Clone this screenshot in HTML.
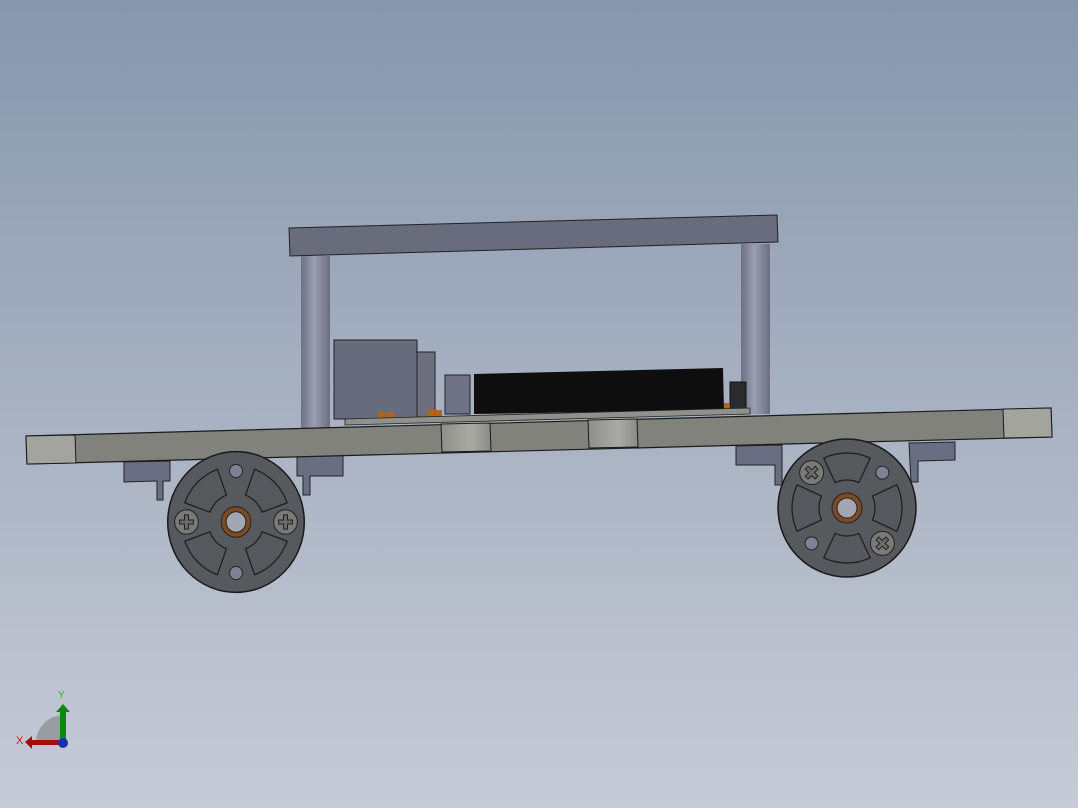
<!DOCTYPE html>
<html><head><meta charset="utf-8"><style>
html,body{margin:0;padding:0;width:1078px;height:808px;overflow:hidden}
svg{display:block}
</style></head><body>
<svg width="1078" height="808" viewBox="0 0 1078 808" xmlns="http://www.w3.org/2000/svg">
<defs>
<linearGradient id="bg" x1="0" y1="0" x2="0" y2="1">
<stop offset="0" stop-color="#8797ac"/><stop offset="1" stop-color="#c7cbd7"/>
</linearGradient>
<linearGradient id="post" x1="0" y1="0" x2="1" y2="0">
<stop offset="0" stop-color="#6d7184"/><stop offset="0.45" stop-color="#9a9eb0"/><stop offset="1" stop-color="#6a6e80"/>
</linearGradient>
<linearGradient id="seg" x1="0" y1="0" x2="1" y2="0">
<stop offset="0" stop-color="#8e8f88"/><stop offset="0.6" stop-color="#a9aaa4"/><stop offset="1" stop-color="#8a8b85"/>
</linearGradient>
<g id="win"><path d="M26.3,9.6 L51.7,18.8 A55,55 0 0 1 18.8,51.7 L9.6,26.3 A28,28 0 0 0 26.3,9.6 Z" fill="#55585c" stroke="#1c1c1c" stroke-width="1.2"/></g>
<g id="wheel">
<circle r="69" fill="#56595d" stroke="#1a1a1a" stroke-width="1.5"/>
<use href="#win"/><use href="#win" transform="rotate(90)"/><use href="#win" transform="rotate(180)"/><use href="#win" transform="rotate(270)"/>
<g transform="translate(50,0)"><circle r="12" fill="#7a7b78" stroke="#222" stroke-width="1"/><path d="M-2,-7h4v5h5v4h-5v5h-4v-5h-5v-4h5z" fill="#6a6b68" stroke="#222" stroke-width="1"/></g>
<g transform="translate(-50,0)"><circle r="12" fill="#7a7b78" stroke="#222" stroke-width="1"/><path d="M-2,-7h4v5h5v4h-5v5h-4v-5h-5v-4h5z" fill="#6a6b68" stroke="#222" stroke-width="1"/></g>
<circle cx="0" cy="-50" r="6.5" fill="#7d8294" stroke="#222" stroke-width="1"/>
<circle cx="0" cy="50" r="6.5" fill="#7d8294" stroke="#222" stroke-width="1"/>
<circle r="15" fill="#7e4a22" stroke="#222" stroke-width="1"/>
<circle r="10" fill="#a2a6b2" stroke="#222" stroke-width="1"/>
</g>
</defs>
<rect width="1078" height="808" fill="url(#bg)"/>

<!-- top bar -->
<polygon points="289,228 777,215 778,242 290,256" fill="#686c7c" stroke="#222" stroke-width="1"/>
<!-- posts -->
<rect x="301" y="256" width="29" height="172" fill="url(#post)"/>
<rect x="741" y="244" width="29" height="170" fill="url(#post)"/>

<!-- components -->
<rect x="334" y="340" width="83" height="79" fill="#676b7c" stroke="#222" stroke-width="1"/>
<rect x="417" y="352" width="18" height="65" fill="#6b6f80" stroke="#222" stroke-width="1"/>
<rect x="445" y="375" width="25" height="39" fill="#6e7284" stroke="#222" stroke-width="1"/>
<polygon points="474,374 723,368 724,410 474,414" fill="#0e0e0e"/>
<rect x="730" y="382" width="16" height="28" fill="#2b2b2b" stroke="#111" stroke-width="1"/>
<rect x="378" y="411" width="7" height="7" fill="#b0651a"/>
<rect x="387" y="411" width="7" height="7" fill="#b0651a"/>
<rect x="428" y="410" width="7" height="7" fill="#b0651a"/>
<rect x="436" y="410" width="6" height="7" fill="#b0651a"/>
<rect x="724" y="403" width="5" height="6" fill="#b0651a"/>
<polygon points="345,419 750,408 750,414 345,425" fill="#8f918a" stroke="#222" stroke-width="0.8"/>

<!-- brackets -->
<polygon points="124,462 170,461 170,481 163,481 163,500 157,500 157,481 124,482" fill="#6a6e82" stroke="#222" stroke-width="1"/>
<polygon points="297,456 343,455 343,476 310,476 310,495 303,495 303,476 297,476" fill="#6a6e82" stroke="#222" stroke-width="1"/>
<polygon points="736,446 782,445 782,485 775,485 775,465 736,465" fill="#6a6e82" stroke="#222" stroke-width="1"/>
<polygon points="909,443 955,442 955,460 918,461 918,482 911,482" fill="#6a6e82" stroke="#222" stroke-width="1"/>

<!-- chassis plate -->
<polygon points="26,436 1051,408 1052,437 27,464" fill="#81827b" stroke="#1a1a1a" stroke-width="1.2"/>
<polygon points="26,436 75,435 76,463 27,464" fill="#a3a49d" stroke="#1a1a1a" stroke-width="1"/>
<polygon points="441,424 490,423 491,451 442,452" fill="url(#seg)" stroke="#1a1a1a" stroke-width="1"/>
<polygon points="588,420 637,419 638,447 589,448" fill="url(#seg)" stroke="#1a1a1a" stroke-width="1"/>
<polygon points="1003,409 1051,408 1052,437 1004,438" fill="#a3a49d" stroke="#1a1a1a" stroke-width="1"/>

<!-- wheels -->
<use href="#wheel" transform="translate(236,522) scale(0.99,1.02)"/>
<use href="#wheel" transform="translate(847,508) rotate(45)"/>

<!-- axis triad -->
<path d="M36,742 A28,28 0 0 1 63,715 L63,742 Z" fill="#9a9ca4"/>
<rect x="60" y="712" width="6" height="30" fill="#0d8a0d"/>
<polygon points="56,712 70,712 63,704" fill="#0d8a0d"/>
<rect x="32" y="740" width="30" height="5" fill="#a01010"/>
<polygon points="32,736 32,749 25,742" fill="#a01010"/>
<circle cx="63" cy="743" r="5" fill="#1a2fb0"/>
<text x="58" y="698" font-family="Liberation Sans, sans-serif" font-size="10" fill="#1bc41b">Y</text>
<text x="16" y="744" font-family="Liberation Sans, sans-serif" font-size="11" fill="#d01010">X</text>
</svg>
</body></html>
